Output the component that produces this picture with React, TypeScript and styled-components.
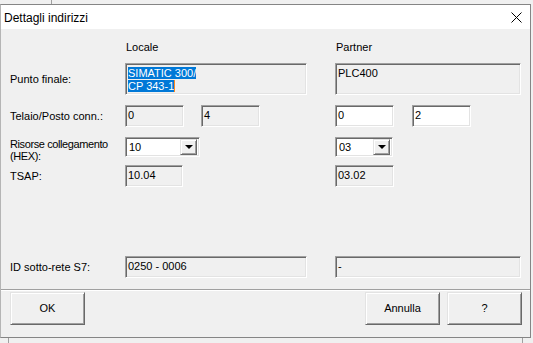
import React from 'react'
import styled, { createGlobalStyle, css } from 'styled-components'

const GlobalStyle = createGlobalStyle`
  html, body {
    margin: 0;
    padding: 0;
    background: #f0f0f0;
    font-family: "Liberation Sans", Arial, sans-serif;
    font-size: 11px;
    color: #000;
  }
`

const sunken = css`
  box-sizing: border-box;
  border-style: solid;
  border-width: 1px;
  border-color: #a0a0a0 #ffffff #ffffff #a0a0a0;
  box-shadow: inset 1px 1px 0 #696969, inset -1px -1px 0 #e3e3e3;
`

const raised = css`
  box-sizing: border-box;
  border-style: solid;
  border-width: 1px;
  border-color: #e3e3e3 #696969 #696969 #e3e3e3;
  box-shadow: inset 1px 1px 0 #ffffff, inset -1px -1px 0 #a0a0a0;
  background: #f0f0f0;
`

const Screen = styled.div`
  width: 533px;
  height: 343px;
  overflow: hidden;
  background: #f0f0f0;
`

const TopStrip = styled.div`
  height: 4px;
  padding-left: 51px;
`

const BehindEdge = styled.div`
  width: 0;
  height: 100%;
  border-left: 1px solid #a0a0a0;
`

const BottomStrip = styled.div`
  height: 5px;
  width: 515px;
  padding-left: 8px;
  display: flex;
  justify-content: space-between;
`

const Dialog = styled.div`
  box-sizing: border-box;
  width: 531px;
  height: 334px;
  border: 1px solid #858585;
  border-left-color: #b5b5b5;
  display: flex;
  flex-direction: column;
`

const TitleBar = styled.div`
  height: 24px;
  flex: none;
  background: #fff;
  display: flex;
  align-items: center;
  justify-content: space-between;
  padding: 0 8px 0 3px;
`

const Title = styled.span`
  font-size: 12px;
  line-height: 14px;
  margin-top: 1px;
`

const Body = styled.div`
  flex: 1;
  background: #f0f0f0;
  display: flex;
  flex-direction: column;
`

const Row = styled.div<{ top: number; h: number; align?: string }>`
  display: grid;
  grid-template-columns: 115px 210px 1fr;
  align-items: ${p => p.align || 'center'};
  padding-left: 9px;
  margin-top: ${p => p.top}px;
  height: ${p => p.h}px;
`

const Label = styled.div<{ pad?: number; tight?: boolean }>`
  line-height: 12px;
  padding-top: ${p => p.pad || 0}px;
  letter-spacing: ${p => (p.tight ? '-0.4px' : 'normal')};
`

const ColHead = styled.div`
  line-height: 13px;
  padding-left: 1px;
`

const Pair = styled.div<{ gap: number }>`
  display: flex;
  gap: ${p => p.gap}px;
  height: 100%;
`

const Field = styled.div<{ w: number; white?: boolean }>`
  ${sunken};
  width: ${p => p.w}px;
  height: 100%;
  background: ${p => (p.white ? '#fff' : '#f0f0f0')};
  padding: 3px 2px 0 2px;
  line-height: 13px;
  white-space: nowrap;
  overflow: hidden;
`

const Selected = styled.span`
  background: #0078d7;
  color: #fff;
`

const Caret = styled.span`
  display: inline-block;
  width: 1px;
  height: 12px;
  background: #ff8a1f;
  vertical-align: -2px;
`

const Combo = styled.div<{ w: number }>`
  ${sunken};
  width: ${p => p.w}px;
  height: 20px;
  background: #fff;
  display: flex;
  align-items: center;
  justify-content: space-between;
  padding: 2px 2px 2px 3px;
`

const DropButton = styled.div`
  ${raised};
  width: 17px;
  height: 16px;
  display: flex;
  align-items: center;
  justify-content: center;
`

const Arrow = styled.div`
  width: 0;
  height: 0;
  border-left: 4px solid transparent;
  border-right: 4px solid transparent;
  border-top: 4px solid #000;
`

const Separator = styled.div`
  margin-top: 11px;
  height: 1px;
  background: #a0a0a0;
  border-bottom: 1px solid #fff;
`

const ButtonBar = styled.div`
  display: flex;
  margin-top: 1px;
  padding: 0 8px 0 9px;
  gap: 7px;
`

const Button = styled.div`
  ${raised};
  width: 75px;
  height: 33px;
  display: flex;
  align-items: center;
  justify-content: center;
  line-height: 13px;
`

const Spacer = styled.div`
  flex: 1;
`

const ComboBox = ({ value, w }: { value: string; w: number }) => (
  <Combo w={w}>
    <span>{value}</span>
    <DropButton>
      <Arrow />
    </DropButton>
  </Combo>
)

export default function App() {
  return (
    <>
      <GlobalStyle />
      <Screen>
        <TopStrip>
          <BehindEdge />
        </TopStrip>
        <Dialog>
          <TitleBar>
            <Title>Dettagli indirizzi</Title>
            <svg width="11" height="11" viewBox="0 0 11 11">
              <path d="M0.5 0.5 L10.5 10.5 M10.5 0.5 L0.5 10.5" stroke="#000" strokeWidth="1" fill="none" />
            </svg>
          </TitleBar>
          <Body>
            <Row top={12} h={13}>
              <span />
              <ColHead>Locale</ColHead>
              <ColHead>Partner</ColHead>
            </Row>
            <Row top={9} h={32}>
              <Label>Punto finale:</Label>
              <Field w={182}>
                <Selected>SIMATIC 300/</Selected>
                <br />
                <Selected>CP 343-1</Selected>
                <Caret />
              </Field>
              <Field w={186}>PLC400</Field>
            </Row>
            <Row top={10} h={22}>
              <Label>Telaio/Posto conn.:</Label>
              <Pair gap={17}>
                <Field w={59}>0</Field>
                <Field w={59}>4</Field>
              </Pair>
              <Pair gap={18}>
                <Field w={59} white>0</Field>
                <Field w={59} white>2</Field>
              </Pair>
            </Row>
            <Row top={10} h={24} align="start">
              <Label pad={1} tight>
                Risorse collegamento
                <br />
                (HEX):
              </Label>
              <ComboBox value="10" w={75} />
              <ComboBox value="03" w={58} />
            </Row>
            <Row top={4} h={22}>
              <Label>TSAP:</Label>
              <Field w={58}>10.04</Field>
              <Field w={59}>03.02</Field>
            </Row>
            <Row top={69} h={22}>
              <Label>ID sotto-rete S7:</Label>
              <Field w={182}>0250 - 0006</Field>
              <Field w={186}>-</Field>
            </Row>
            <Separator />
            <ButtonBar>
              <Button>OK</Button>
              <Spacer />
              <Button>Annulla</Button>
              <Button>?</Button>
            </ButtonBar>
          </Body>
        </Dialog>
        <BottomStrip>
          <BehindEdge />
          <BehindEdge />
        </BottomStrip>
      </Screen>
    </>
  )
}
